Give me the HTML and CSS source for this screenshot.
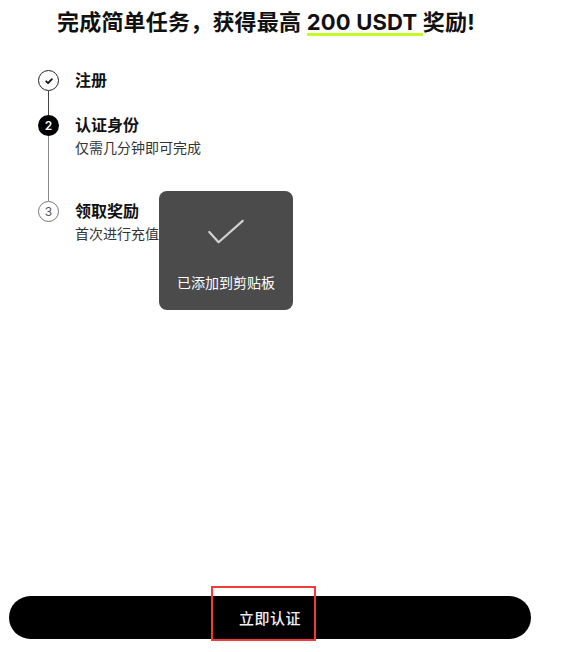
FILE: index.html
```html
<!DOCTYPE html>
<html lang="zh-CN">
  <head>
    <meta charset="UTF-8" />
    <meta name="viewport" content="width=device-width, initial-scale=1.0" />
    <title>认证身份</title>
    <link rel="stylesheet" href="styles.css">
  </head>
  <body>
    <div class="page">
      <h1 class="headline">
        完成简单任务，获得最高 <span class="highlight">200 USDT </span>奖励!
      </h1>

      <ol class="steps">
        <li class="step done">
          <div class="marker">
            <span class="dot">
              <svg viewBox="0 0 12 12" fill="none" stroke="currentColor" stroke-width="1.8" stroke-linecap="round" stroke-linejoin="round">
                <path d="M3.2 6.3l1.9 1.8 3.8-4" />
              </svg>
            </span>
            <span class="line"></span>
          </div>
          <div class="body">
            <div class="step-title">注册</div>
          </div>
        </li>
        <li class="step current">
          <div class="marker">
            <span class="dot">2</span>
            <span class="line"></span>
          </div>
          <div class="body">
            <div class="step-title">认证身份</div>
            <div class="step-desc">仅需几分钟即可完成</div>
          </div>
        </li>
        <li class="step todo">
          <div class="marker">
            <span class="dot">3</span>
          </div>
          <div class="body">
            <div class="step-title">领取奖励</div>
            <div class="step-desc">首次进行充值</div>
          </div>
        </li>
      </ol>

      <div class="footer">
        <button class="cta">立即认证</button>
        <span class="focus-box"></span>
      </div>

      <div class="toast">
        <svg class="toast-icon" viewBox="0 0 40 28" fill="none" stroke="currentColor" stroke-width="2.4" stroke-linecap="round" stroke-linejoin="round">
          <path d="M2 14l10 11L38 2" />
        </svg>
        <span class="toast-text">已添加到剪贴板</span>
      </div>
    </div>
  </body>
</html>
```

FILE: styles.css
```css
:root {
  --text: #111111;
  --muted: #333333;
  --accent: #c2fa2a;
  --toast: #4b4b4b;
  --focus: #ee3b3b;
}

* {
  box-sizing: border-box;
}

body {
  margin: 0;
  background: #ffffff;
  font-family: Inter, "Noto Sans CJK SC", sans-serif;
  color: var(--text);
}

.page {
  position: relative;
  display: flex;
  flex-direction: column;
  width: 572px;
  height: 652px;
  padding: 7px 0 0 38px;
}

.headline {
  margin: 0 0 0 19px;
  font-size: 22px;
  line-height: 30px;
  font-weight: 700;
  white-space: nowrap;
  letter-spacing: 0.2px;
}

.highlight {
  background: linear-gradient(var(--accent), var(--accent)) no-repeat 0 100% / 100% 3px;
  padding-bottom: 1px;
}

.steps {
  list-style: none;
  margin: 33px 0 0;
  padding: 0;
}

.step {
  display: flex;
  gap: 16px;
}

.step.done {
  height: 45px;
}

.step.current {
  height: 86px;
}

.marker {
  display: flex;
  flex-direction: column;
  align-items: center;
  width: 21px;
}

.dot {
  display: flex;
  align-items: center;
  justify-content: center;
  flex: none;
  width: 21px;
  height: 21px;
  border-radius: 50%;
  font-size: 12px;
  font-weight: 600;
}

.dot svg {
  width: 12px;
  height: 12px;
}

.done .dot {
  border: 1.5px solid #222222;
  color: #111111;
}

.current .dot {
  background: #000000;
  color: #ffffff;
}

.todo .dot {
  border: 1px solid #777777;
  color: #555555;
  font-weight: 400;
}

.line {
  flex: 1;
  width: 1.5px;
  background: #444444;
}

.current .line {
  width: 1px;
  background: #8a8a8a;
}

.step-title {
  font-size: 16px;
  line-height: 21px;
  font-weight: 700;
}

.step-desc {
  margin-top: 2px;
  font-size: 14px;
  line-height: 20px;
  color: var(--muted);
}

.footer {
  position: relative;
  margin: auto 0 13px -29px;
  width: 522px;
}

.cta {
  display: block;
  width: 522px;
  height: 43px;
  border: none;
  border-radius: 22px;
  background: #000000;
  color: #f0f0f0;
  font-family: inherit;
  font-size: 15px;
  font-weight: 500;
  letter-spacing: 0.5px;
  cursor: pointer;
}

.focus-box {
  position: absolute;
  left: 202px;
  top: -10px;
  width: 105px;
  height: 55px;
  border: 2px solid var(--focus);
}

.toast {
  position: absolute;
  left: 159px;
  top: 191px;
  display: flex;
  flex-direction: column;
  align-items: center;
  width: 134px;
  height: 119px;
  padding-top: 28px;
  border-radius: 8px;
  background: var(--toast);
  color: #ffffff;
}

.toast-icon {
  width: 38px;
  height: 26px;
  color: #d0d0d0;
}

.toast-text {
  margin-top: 28px;
  font-size: 14px;
  line-height: 20px;
}
```
